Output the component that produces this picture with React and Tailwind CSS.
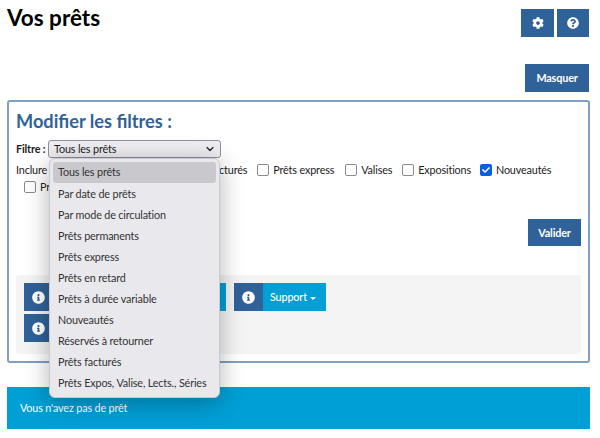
import { ChevronDown } from "lucide-react";
import { FaCog, FaQuestionCircle, FaInfoCircle, FaCheck } from "react-icons/fa";

const options = [
  "Tous les prêts",
  "Par date de prêts",
  "Par mode de circulation",
  "Prêts permanents",
  "Prêts express",
  "Prêts en retard",
  "Prêts à durée variable",
  "Nouveautés",
  "Réservés à retourner",
  "Prêts facturés",
  "Prêts Expos, Valise, Lects., Séries",
];

function Check({ label, checked, className }) {
  return (
    <label className={`flex items-center gap-[4px] whitespace-nowrap ${className || ""}`}>
      {checked ? (
        <span className="flex h-[12px] w-[12px] items-center justify-center rounded-[2px] bg-[#0a5ee0] text-white">
          <FaCheck size={8} />
        </span>
      ) : (
        <span className="h-[12px] w-[12px] rounded-[2px] border border-[#8a8a8a] bg-white" />
      )}
      <span>{label}</span>
    </label>
  );
}

function InfoButton({ label, caret, className }) {
  return (
    <div className={`flex h-[28px] bg-[#009fd6] text-white ${className || ""}`}>
      <div className="flex w-[29px] items-center justify-center bg-[#2f6299]">
        <FaInfoCircle size={13} />
      </div>
      <div className="flex flex-1 items-center gap-[3px] px-[7px] font-medium">
        {label}
        {caret && <span className="mt-[2px] border-x-[3px] border-t-[3px] border-x-transparent border-t-white" />}
      </div>
    </div>
  );
}

export default function App() {
  return (
    <div className="relative h-[438px] w-[600px] overflow-hidden bg-white pl-[7px] pr-[10px] text-[10.8px] tracking-[-0.15px] text-[#222] font-['Lato',sans-serif]">
      {/* Header */}
      <div className="flex items-start justify-between pr-[1px] pt-[9px]">
        <h1 className="-mt-[6px] text-[22.5px] font-bold leading-[30px] tracking-normal text-black">Vos prêts</h1>
        <div className="flex gap-[3px]">
          <button className="flex h-[28px] w-[33px] items-center justify-center bg-[#2f6299] text-white">
            <FaCog size={12} />
          </button>
          <button className="flex h-[28px] w-[32px] items-center justify-center bg-[#2f6299] text-white">
            <FaQuestionCircle size={12} />
          </button>
        </div>
      </div>

      <div className="mt-[27px] flex justify-end pr-[1px]">
        <button className="h-[28px] w-[64px] bg-[#2f6299] font-bold text-white">Masquer</button>
      </div>

      {/* Filter panel */}
      <div className="mt-[8px] h-[263px] rounded-[3px] border-2 border-[#7f9fc4] px-[7px] pt-[7px]">
        <h2 className="text-[18.2px] font-bold leading-[24px] tracking-normal text-[#2f6299]">Modifier les filtres :</h2>
        <div className="mt-[7px] flex items-center">
          <span className="w-[32px] font-bold">Filtre :</span>
          <div className="flex h-[18px] w-[173px] items-center justify-between rounded-[3px] border border-[#8f8f9d] bg-[#efeff3] pl-[5px] pr-[4px]">
            Tous les prêts
            <ChevronDown size={12} strokeWidth={2.5} />
          </div>
        </div>
        <div className="mt-[3px] flex h-[18px] items-center">
          <span>Inclure</span>
          <span className="ml-[172px]">cturés</span>
          <Check label="Prêts express" className="ml-[10px]" />
          <Check label="Valises" className="ml-[11px]" />
          <Check label="Expositions" className="ml-[10px]" />
          <Check label="Nouveautés" checked className="ml-[9px]" />
        </div>
        <Check label="Pr" className="ml-[8px]" />
        <div className="mt-[24px] flex justify-end">
          <button className="h-[27px] w-[53px] bg-[#2f6299] font-bold text-white">Valider</button>
        </div>
        <div className="mt-[29px] h-[79px] rounded-[3px] bg-[#f4f4f4] p-[8px]">
          <div className="flex gap-[8px]">
            <InfoButton label="" className="w-[202px]" />
            <InfoButton label="Support" caret className="w-[92px]" />
          </div>
          <InfoButton label="" className="mt-[3px] w-[100px]" />
        </div>
      </div>

      {/* Message */}
      <div className="mt-[24px] flex h-[42px] items-center bg-[#009fd6] px-[13px] text-white">
        Vous n'avez pas de prêt
      </div>

      {/* Open select list */}
      <ul className="absolute left-[49px] top-[158px] w-[171px] rounded-[6px] border border-[#c9c9cf] bg-[#e9e8ed] p-[3px] shadow-[0_4px_24px_rgba(0,0,0,0.3)]">
        {options.map((option, i) => (
          <li
            key={option}
            className={`flex h-[21.1px] items-center whitespace-nowrap rounded-[3px] px-[5px] text-[#333] ${i === 0 ? "bg-[#c9c8cd]" : ""}`}
          >
            {option}
          </li>
        ))}
      </ul>
    </div>
  );
}
